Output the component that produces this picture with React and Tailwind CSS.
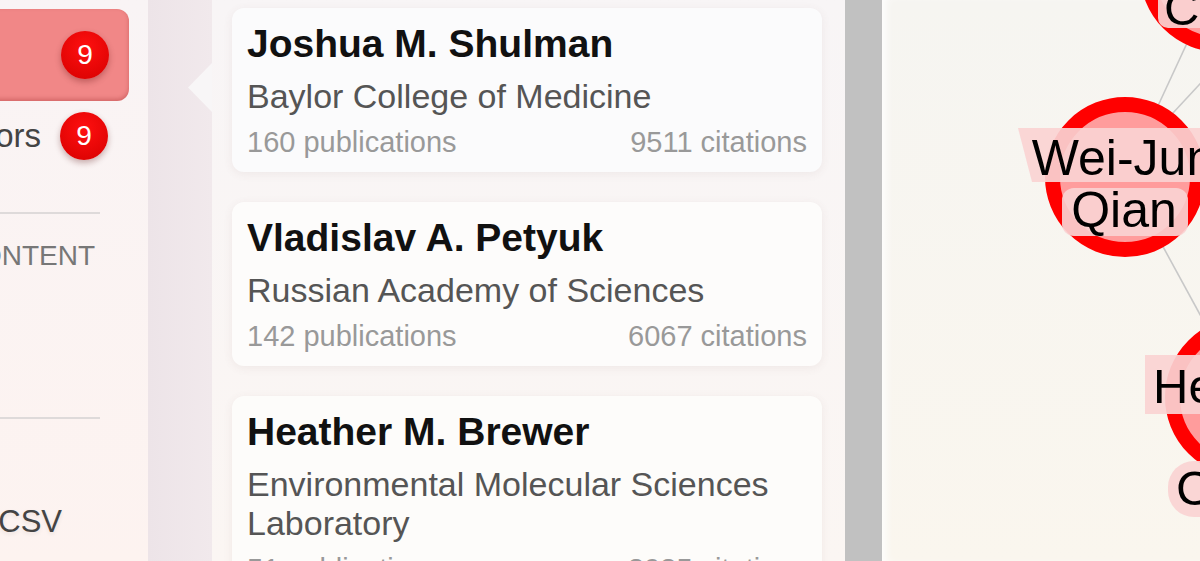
import React from "react";

function Badge() {
  return (
    <div className="flex h-[48px] w-[48px] shrink-0 items-center justify-center rounded-full bg-[radial-gradient(circle_at_50%_35%,#ff1010,#d60000)] text-[28px] leading-none text-white shadow-[0_3px_6px_rgba(80,0,0,0.3)]">
      9
    </div>
  );
}

const authors = [
  { name: "Joshua M. Shulman", aff: "Baylor College of Medicine", pubs: 160, cites: 9511, bg: "bg-[#fbfbfc]" },
  { name: "Vladislav A. Petyuk", aff: "Russian Academy of Sciences", pubs: 142, cites: 6067, bg: "bg-[#fdfcfb]" },
  { name: "Heather M. Brewer", aff: "Environmental Molecular Sciences Laboratory", pubs: 51, cites: 3985, bg: "bg-[#fdfcfa]" },
];

function Card({ a }) {
  return (
    <div className={`rounded-[12px] ${a.bg} px-[15px] pt-[13.5px] pb-[13.5px] shadow-[0_2px_10px_rgba(120,80,80,0.08)]`}>
      <div className="text-[39px] font-bold leading-[44px] text-[#111]">{a.name}</div>
      <div className="mt-[11.5px] text-[34px] leading-[39px] text-[#555]">{a.aff}</div>
      <div className="mt-[9.5px] flex justify-between text-[29px] leading-[33px] text-[#999]">
        <span>{a.pubs} publications</span>
        <span>{a.cites} citations</span>
      </div>
    </div>
  );
}

function Graph() {
  const ring = "#ff0000";
  const fill = "#ff9c9c";
  const lab = "#fad3d3";
  return (
    <svg width="318" height="561" viewBox="882 0 318 561" className="block">
      <g stroke="#c8c8c8" strokeWidth="1.6">
        <line x1="1220" y1="-28" x2="1125" y2="177" />
        <line x1="1120" y1="170" x2="1262" y2="17" />
        <line x1="1125" y1="177" x2="1245" y2="397" />
      </g>
      {/* top node */}
      <circle cx="1220" cy="-28" r="72.5" fill={fill} stroke={ring} strokeWidth="15" />
      <rect x="1158" y="-20" width="60" height="48" rx="10" fill={lab} opacity="0.92" />
      <text x="1164" y="25" fontSize="49" fill="#000" fontFamily="Liberation Sans, Arial, sans-serif">Ch</text>
      {/* Wei-Jun node */}
      <circle cx="1125" cy="177" r="72.5" fill={fill} stroke={ring} strokeWidth="15" />
      <polygon points="1018,128 1215,128 1215,182 1032,182" fill={lab} opacity="0.92" />
      <rect x="1062" y="188" width="126" height="48" rx="12" fill={lab} opacity="0.92" />
      <text x="1123" y="175" fontSize="50" textAnchor="middle" fill="#000" fontFamily="Liberation Sans, Arial, sans-serif">Wei-Jun</text>
      <text x="1124" y="227" fontSize="50" textAnchor="middle" fill="#000" fontFamily="Liberation Sans, Arial, sans-serif">Qian</text>
      {/* bottom node */}
      <circle cx="1245" cy="397" r="72.5" fill={fill} stroke={ring} strokeWidth="15" />
      <rect x="1145" y="355" width="120" height="59" fill={lab} opacity="0.92" />
      <rect x="1168" y="461" width="100" height="56" rx="26" fill={lab} opacity="0.92" />
      <text x="1153" y="403" fontSize="49" fill="#000" fontFamily="Liberation Sans, Arial, sans-serif">Heather</text>
      <text x="1176" y="505" fontSize="49" fill="#000" fontFamily="Liberation Sans, Arial, sans-serif">Chen</text>
    </svg>
  );
}

export default function App() {
  return (
    <div className="flex h-[561px] w-[1200px] overflow-hidden font-['Liberation_Sans',Arial,sans-serif]">
      {/* sidebar */}
      <div className="flex w-[148px] shrink-0 flex-col overflow-hidden bg-gradient-to-b from-[#f9f4f5] to-[#fdf3f0]">
        <div className="mt-[9px] ml-[-40px] flex h-[92px] w-[169px] shrink-0 items-center justify-end rounded-[12px] bg-[#f18787] pr-[20px] shadow-[inset_0_-2px_4px_rgba(120,0,0,0.25)]">
          <Badge />
        </div>
        <div className="flex h-[70px] w-[128px] shrink-0 items-center justify-end pr-[20px]">
          <span className="shrink-0 whitespace-nowrap text-[33px] leading-[38px] text-[#444]">Coauthors</span>
          <div className="ml-[19px]">
            <Badge />
          </div>
        </div>
        <div className="mt-[41px] h-[2px] w-[100px] shrink-0 bg-[#dedada]" />
        <div className="mt-[26px] flex w-[95px] shrink-0 justify-end">
          <span className="shrink-0 whitespace-nowrap text-[28px] leading-[32px] text-[#777]">CONTENT</span>
        </div>
        <div className="mt-[145px] h-[2px] w-[100px] shrink-0 bg-[#dedada]" />
        <div className="mt-[86px] flex w-[62px] shrink-0 justify-end">
          <span className="shrink-0 whitespace-nowrap text-[31px] leading-[34px] text-[#444] [text-shadow:0_2px_4px_rgba(0,0,0,0.08)]">Export CSV</span>
        </div>
      </div>

      {/* strip */}
      <div className="w-[64px] shrink-0 bg-gradient-to-r from-[#ede4e8] to-[#f1e9ec]" />

      {/* list panel */}
      <div className="relative w-[633px] shrink-0 bg-gradient-to-b from-[#f8f5f6] to-[#fbf6f3] pt-[8px] pl-[20px] pr-[23px]">
        <div className="absolute left-[-24px] top-[63px] h-[49px] w-[24px] bg-[#f8f6f7] [clip-path:polygon(100%_0,0_50%,100%_100%)]" />
        <div className="flex flex-col gap-[30px]">
          {authors.map((a) => (
            <Card key={a.name} a={a} />
          ))}
        </div>
      </div>

      {/* scrollbar */}
      <div className="w-[37px] shrink-0 bg-[#c1c1c1]" />

      {/* graph */}
      <div className="relative flex-1 overflow-hidden bg-gradient-to-b from-[#f6f5f1] to-[#faf6ee] shadow-[inset_8px_0_8px_-4px_rgba(255,255,255,0.9)]">
        <Graph />
      </div>
    </div>
  );
}
